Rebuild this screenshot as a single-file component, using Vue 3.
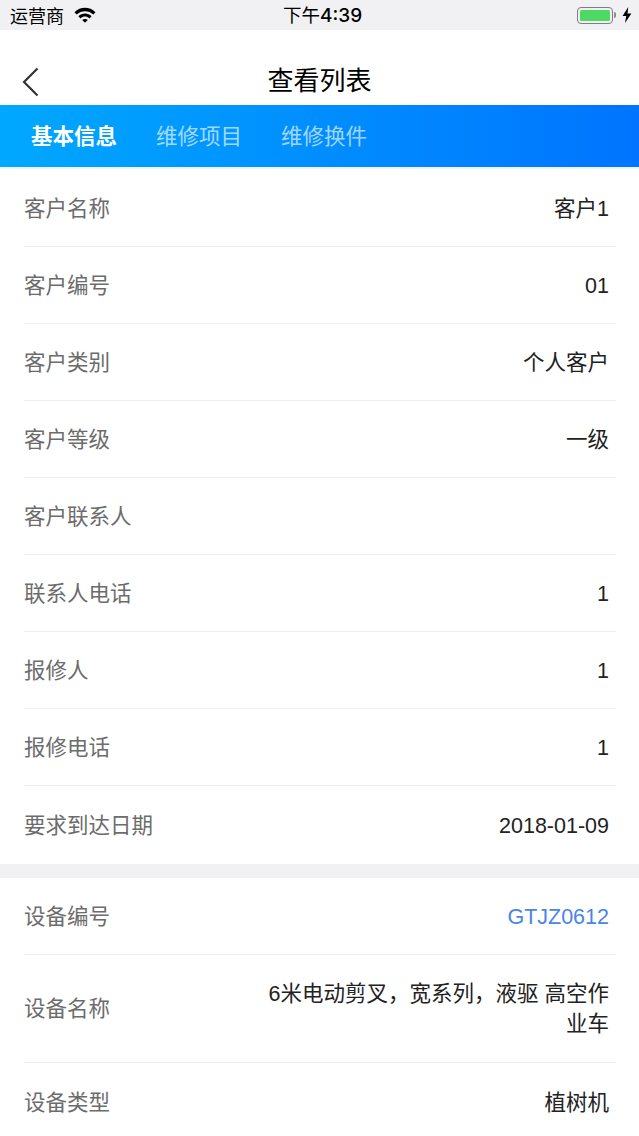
<template>
  <div class="page">
    <div class="status">
      <div class="status-left">
        <span class="carrier">运营商</span>
        <svg class="wifi" width="22" height="16" viewBox="0 0 22 16">
          <path d="M0.5 5.2C6.3 -0.6 15.7 -0.6 21.5 5.2L19.3 7.5C14.7 3 7.3 3 2.7 7.5Z" fill="#000" />
          <path d="M4.4 9.2C8 5.6 14 5.6 17.6 9.2L15.4 11.4C13 9 9 9 6.6 11.4Z" fill="#000" />
          <path d="M8.2 13C9.8 11.5 12.2 11.5 13.8 13L11 15.8Z" fill="#000" />
        </svg>
      </div>
      <span class="time">下午<span class="clock">4:39</span></span>
      <div class="status-right">
        <div class="battery"><div class="battery-fill"></div></div>
        <div class="battery-tip"></div>
        <svg class="bolt" width="10" height="16" viewBox="0 0 10 16">
          <path d="M6.2 0L0.6 9H4.2L3 16L9.4 6.4H5.6Z" fill="#000" />
        </svg>
      </div>
    </div>

    <div class="nav">
      <svg class="back" width="18" height="30" viewBox="0 0 18 30">
        <path d="M15.5 1.5L2 15L15.5 28.5" fill="none" stroke="#333" stroke-width="2.2" />
      </svg>
      <h1>查看列表</h1>
    </div>

    <div class="tabs">
      <span v-for="(tab, i) in tabs" :key="tab" class="tab" :class="{ active: i === 0 }">{{ tab }}</span>
    </div>

    <div class="section first">
      <div v-for="row in customerRows" :key="row.label" class="row">
        <span class="label">{{ row.label }}</span>
        <span class="value">{{ row.value }}</span>
      </div>
    </div>

    <div class="gap"></div>

    <div class="section">
      <div v-for="row in deviceRows" :key="row.label" class="row" :class="{ tall: row.tall }">
        <span class="label">{{ row.label }}</span>
        <span class="value" :class="{ link: row.link }">{{ row.value }}</span>
      </div>
    </div>
  </div>
</template>

<script setup>
const tabs = ['基本信息', '维修项目', '维修换件']

const customerRows = [
  { label: '客户名称', value: '客户1' },
  { label: '客户编号', value: '01' },
  { label: '客户类别', value: '个人客户' },
  { label: '客户等级', value: '一级' },
  { label: '客户联系人', value: '' },
  { label: '联系人电话', value: '1' },
  { label: '报修人', value: '1' },
  { label: '报修电话', value: '1' },
  { label: '要求到达日期', value: '2018-01-09' }
]

const deviceRows = [
  { label: '设备编号', value: 'GTJZ0612', link: true },
  { label: '设备名称', value: '6米电动剪叉，宽系列，液驱 高空作业车', tall: true },
  { label: '设备类型', value: '植树机' }
]
</script>

<style>
html, body {
  margin: 0;
  background: #fff;
}
</style>

<style scoped>
.page {
  width: 639px;
  height: 1136px;
  overflow: hidden;
  background: #fff;
  font-family: "Liberation Sans", "Noto Sans CJK SC", sans-serif;
}

.status {
  height: 30px;
  background: #f1f1f3;
  display: flex;
  align-items: center;
  justify-content: space-between;
  padding: 0 7px 0 10px;
  position: relative;
  color: #000;
}

.status-left {
  display: flex;
  align-items: center;
  gap: 10px;
}

.carrier {
  font-size: 18px;
}

.time {
  position: absolute;
  left: 283px;
  top: 4px;
  font-size: 18.5px;
  line-height: 24px;
}

.clock {
  font-family: Inter, "Liberation Sans", sans-serif;
  font-size: 19px;
  font-weight: 500;
}

.status-right {
  display: flex;
  align-items: center;
}

.battery {
  width: 36px;
  height: 17px;
  box-sizing: border-box;
  border: 1px solid #7f7f7f;
  border-radius: 4px;
  padding: 2px;
}

.battery-fill {
  height: 100%;
  background: #4cd964;
  border-radius: 1.5px;
}

.battery-tip {
  width: 2px;
  height: 6px;
  background: #8a8a8a;
  border-radius: 0 2px 2px 0;
  margin-left: 1px;
  margin-right: 6px;
}

.nav {
  height: 75px;
  position: relative;
  display: flex;
  align-items: center;
  justify-content: center;
}

.nav h1 {
  margin: 21px 0 0;
  font-size: 26px;
  font-weight: 400;
  color: #000;
}

.back {
  position: absolute;
  left: 22px;
  top: 37px;
}

.tabs {
  height: 62px;
  box-sizing: border-box;
  padding: 0 0 4px 31px;
  background: linear-gradient(90deg, #00a8ff, #0074ff);
  display: flex;
  align-items: center;
  gap: 39px;
}

.tab {
  font-size: 21.5px;
  color: rgba(255, 255, 255, 0.65);
}

.tab.active {
  color: #fff;
  font-weight: 700;
}

.section {
  padding-left: 24px;
  padding-right: 23px;
}

.section.first {
  border-top: 2px solid #eef5f9;
  padding-top: 1px;
}

.row {
  box-sizing: border-box;
  min-height: 77px;
  padding-top: 1px;
  border-bottom: 1px solid #efeff1;
  display: flex;
  align-items: center;
  justify-content: space-between;
  gap: 20px;
  font-size: 21.5px;
  line-height: 30px;
}

.row:last-child {
  border-bottom: none;
  min-height: 78px;
}

.row.tall {
  min-height: 108px;
}

.label {
  color: #6c6c6c;
  flex-shrink: 0;
}

.value {
  color: #222;
  text-align: right;
  padding-right: 7px;
  max-width: 350px;
}

.value.link {
  color: #4a84e8;
}

.gap {
  height: 14px;
  background: #f1f1f4;
}
</style>
